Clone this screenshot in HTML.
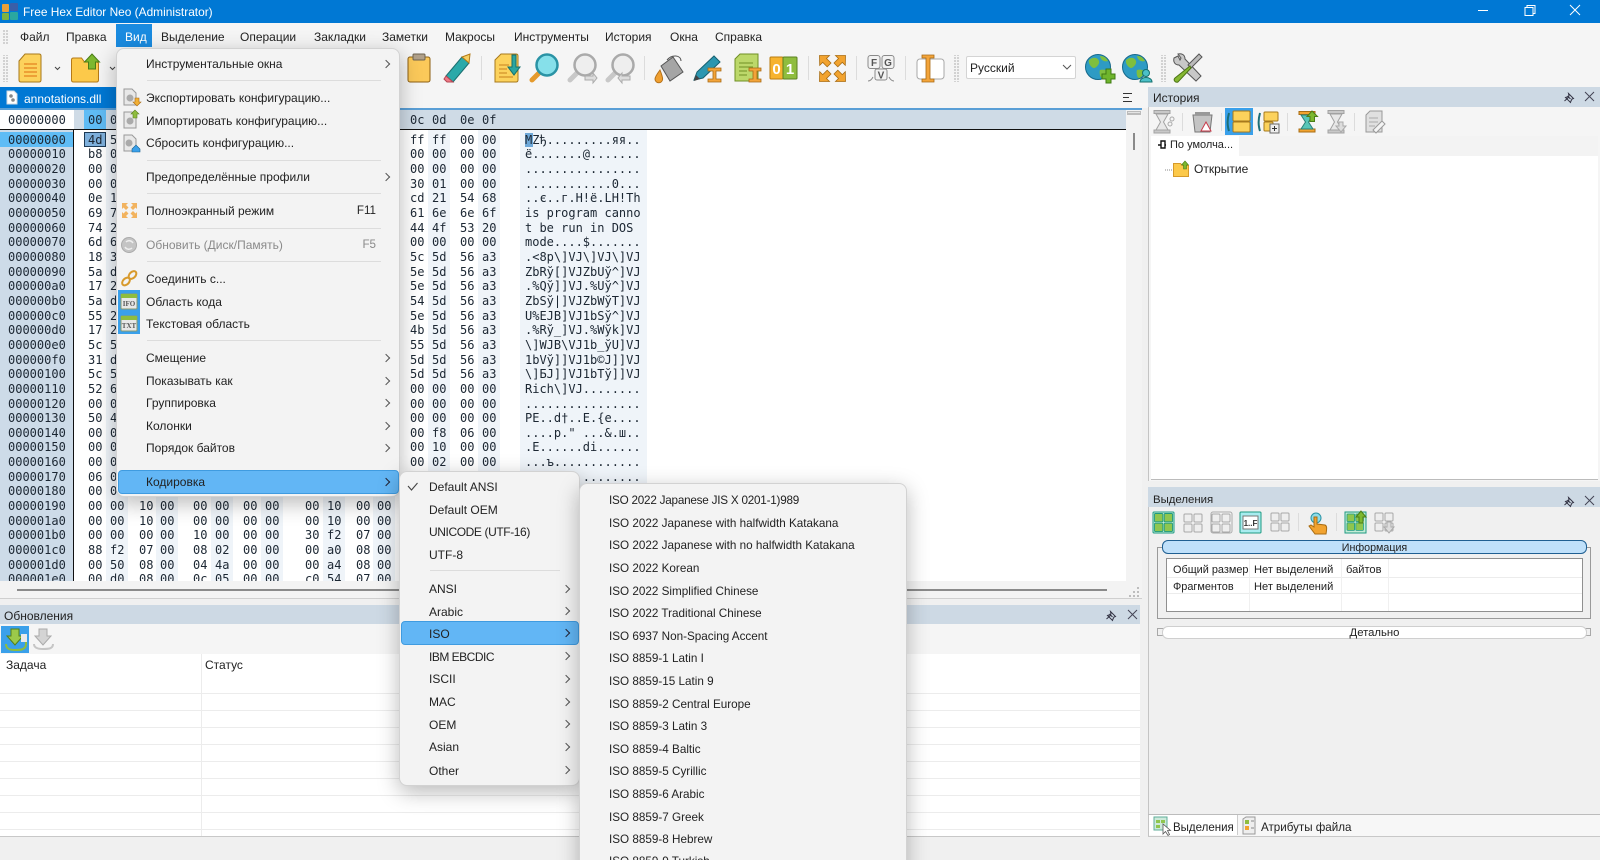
<!DOCTYPE html>
<html lang="ru"><head><meta charset="utf-8"><title>Free Hex Editor Neo</title>
<style>
html,body{margin:0;padding:0;width:1600px;height:860px;overflow:hidden;background:#f0f0f0}
body{position:relative;font:12px/16px "Liberation Sans","Noto Sans CJK SC",sans-serif;color:#222}
.a,.a>div,.t,.hx{position:absolute}
.t{white-space:nowrap}
.hx{font:12px/14.65px "DejaVu Sans Mono","Liberation Mono",monospace;color:#1c2733;white-space:pre}
svg{position:absolute;left:0;top:0}
.menu{position:absolute;background:#f3f3f3;border:1px solid #d2d2d2;border-radius:8px;box-shadow:0 6px 22px rgba(0,0,0,.28);box-sizing:border-box}
.iso .t{font-size:11.7px}
.sep{position:absolute;height:1px;background:#dcdcdc}
.arr{position:absolute;width:5px;height:5px;border-top:1px solid #555;border-right:1px solid #555;transform:rotate(45deg)}
.hl{position:absolute;background:#62b6f5;border:1px solid #3f9be0;border-radius:4px;box-sizing:border-box}
.ln{position:absolute;background:#ececec;height:1px}
</style></head><body>

<!-- title bar -->
<div class="a" style="left:0;top:0;width:1600px;height:23px;background:#0078d4"></div>
<svg width="20" height="23" style="left:2px;top:2px"><rect x="0" y="2" width="7" height="8" rx="1" fill="#e8a13a"/><rect x="8" y="1" width="8" height="8" rx="1" fill="#3a5fa8"/><rect x="0" y="11" width="7" height="7" rx="1" fill="#7cb342"/><rect x="8" y="10" width="8" height="8" rx="1" fill="#2aa7a0"/></svg>
<div class="t" style="left:23px;top:4px;color:#fff;font-size:11.9px">Free Hex Editor Neo (Administrator)</div>
<svg width="1600" height="23"><path d="M1478 10.500h10" stroke="#fff"/><path d="M1525 7.500h8v8h-8zM1527 7.500v-2h8v8h-2" fill="none" stroke="#fff"/><path d="M1570 5l10 10M1580 5l-10 10" stroke="#fff" fill="none"/></svg>

<!-- menubar + toolbar -->
<div class="a" style="left:0;top:23px;width:1600px;height:85px;background:#f5f5f5"></div>
<div class="a" style="left:116px;top:24px;width:36px;height:23px;background:#1a8be0"></div>
<div class="t" style="left:20px;top:29px">Файл</div>
<div class="t" style="left:66px;top:29px">Правка</div>
<div class="t" style="left:125px;top:29px;color:#fff">Вид</div>
<div class="t" style="left:161px;top:29px">Выделение</div>
<div class="t" style="left:240px;top:29px">Операции</div>
<div class="t" style="left:314px;top:29px">Закладки</div>
<div class="t" style="left:382px;top:29px">Заметки</div>
<div class="t" style="left:445px;top:29px">Макросы</div>
<div class="t" style="left:514px;top:29px">Инструменты</div>
<div class="t" style="left:605px;top:29px">История</div>
<div class="t" style="left:670px;top:29px">Окна</div>
<div class="t" style="left:715px;top:29px">Справка</div>

<!-- combo -->
<div class="a" style="left:966px;top:56px;width:110px;height:23px;background:#fff;border:1px solid #d4d4d4;border-radius:2px;box-sizing:border-box"></div>
<div class="t" style="left:970px;top:60px">Русский</div>

<!-- tab -->
<div class="a" style="left:0;top:87px;width:118px;height:21px;background:#0078d4"></div>
<div class="t" style="left:24px;top:91px;color:#fff;font-size:12px">annotations.dll</div>

<!-- hex -->
<div class="a" style="left:0;top:108px;width:1142px;height:473px;overflow:hidden;background:#fff">
  <div style="left:0;top:0;width:1142px;height:2px;background:#5a9fd6"></div>
  <div style="left:74px;top:2px;width:1052px;height:19px;background:#cfdbe6"></div>
  <div style="left:84px;top:2px;width:22px;height:19px;background:#5fbcf5"></div>
  <div style="left:0;top:21px;width:1126px;height:1px;background:#111"></div>
  <div style="left:73px;top:21px;width:1px;height:452px;background:#111"></div>
  <div style="left:0;top:22px;width:73px;height:451px;background:#cddbe8"></div>
  <div style="left:0;top:24px;width:73px;height:15px;background:#5fbcf5"></div>
  <div style="left:106px;top:22px;width:22px;height:451px;background:#eff4f9"></div>
  <div style="left:156px;top:22px;width:22px;height:451px;background:#eff4f9"></div>
  <div style="left:211px;top:22px;width:22px;height:451px;background:#eff4f9"></div>
  <div style="left:261px;top:22px;width:22px;height:451px;background:#eff4f9"></div>
  <div style="left:323px;top:22px;width:22px;height:451px;background:#eff4f9"></div>
  <div style="left:373px;top:22px;width:22px;height:451px;background:#eff4f9"></div>
  <div style="left:428px;top:22px;width:22px;height:451px;background:#eff4f9"></div>
  <div style="left:478px;top:22px;width:22px;height:451px;background:#eff4f9"></div>
  <div style="left:520px;top:22px;width:127px;height:451px;background:#eff4f9"></div>
  <div style="left:84px;top:24px;width:22px;height:15px;background:#7eb0dc;border:1px solid #1d3a55;box-sizing:border-box"></div>
  <div style="left:525px;top:25px;width:8px;height:14px;background:#6ea8d8"></div>
  <div class="hx" style="left:8px;top:5px">00000000</div>
  <div class="hx" style="left:88px;top:5px">00</div><div class="hx" style="left:110px;top:5px">01</div>
  <div class="hx" style="left:410px;top:5px">0c</div><div class="hx" style="left:432px;top:5px">0d</div><div class="hx" style="left:460px;top:5px">0e</div><div class="hx" style="left:482px;top:5px">0f</div>
  <div class="hx" style="left:8px;top:24.700px">00000000
00000010
00000020
00000030
00000040
00000050
00000060
00000070
00000080
00000090
000000a0
000000b0
000000c0
000000d0
000000e0
000000f0
00000100
00000110
00000120
00000130
00000140
00000150
00000160
00000170
00000180
00000190
000001a0
000001b0
000001c0
000001d0
000001e0</div>
  <div class="hx" style="left:88px;top:24.700px">4d
b8
00
00
0e
69
74
6d
18
5a
17
5a
55
17
5c
31
5c
52
00
50
00
00
00
06
00
00
00
00
88
00
00</div>
  <div class="hx" style="left:110px;top:24.700px">5a
00
00
00
1f
73
20
6f
33
d0
25
d0
25
25
5d
d0
5d
69
00
45
00
00
00
00
00
00
00
00
f2
50
d0</div>
  <div class="hx" style="left:139px;top:390.950px">10
10
00
07
08
08</div>
  <div class="hx" style="left:160px;top:390.950px">00
00
00
00
00
00</div>
  <div class="hx" style="left:193px;top:390.950px">00
00
10
08
04
0c</div>
  <div class="hx" style="left:215px;top:390.950px">00
00
00
02
4a
05</div>
  <div class="hx" style="left:243px;top:390.950px">00
00
00
00
00
00</div>
  <div class="hx" style="left:265px;top:390.950px">00
00
00
00
00
00</div>
  <div class="hx" style="left:305px;top:390.950px">00
00
30
00
00
c0</div>
  <div class="hx" style="left:327px;top:390.950px">10
10
f2
a0
a4
54</div>
  <div class="hx" style="left:356px;top:390.950px">00
00
07
08
08
07</div>
  <div class="hx" style="left:377px;top:390.950px">00
00
00
00
00
00</div>
  <div class="hx" style="left:410px;top:24.700px">ff
00
00
30
cd
61
44
00
5c
5e
5e
54
5e
4b
55
5d
5d
00
00
00
00
00
00</div>
  <div class="hx" style="left:432px;top:24.700px">ff
00
00
01
21
6e
4f
00
5d
5d
5d
5d
5d
5d
5d
5d
5d
00
00
00
f8
10
02</div>
  <div class="hx" style="left:460px;top:24.700px">00
00
00
00
54
6e
53
00
56
56
56
56
56
56
56
56
56
00
00
00
06
00
00</div>
  <div class="hx" style="left:482px;top:24.700px">00
00
00
00
68
6f
20
00
a3
a3
a3
a3
a3
a3
a3
a3
a3
00
00
00
00
00
00</div>
  <div class="hx" style="left:525px;top:24.700px">MZђ.........яя..
ё.......@.......
................
............0...
..є..г.H!ё.LH!Th
is program canno
t be run in DOS 
mode....$.......
.&lt;8p\]VJ\]VJ\]VJ
ZbRў[]VJZbUў^]VJ
.%Qў]]VJ.%Uў^]VJ
ZbSў|]VJZbWўT]VJ
U%EJB]VJ1bSў^]VJ
.%Rў_]VJ.%Wўk]VJ
\]WJB\VJ1b_ўU]VJ
1bVў]]VJ1b©J]]VJ
\]БJ]]VJ1bTў]]VJ
Rich\]VJ........
................
PE..d†..E.{е....
....р." ...&amp;.ш..
.Е......di......
...ъ............
................</div>
</div>

<!-- editor scrollbars -->
<div class="a" style="left:1126px;top:110px;width:16px;height:488px;background:#f3f3f3"></div>
<div class="a" style="left:1127px;top:111px;width:14px;height:4px;background:#e4e4e4;border:1px solid #bbb;border-bottom-width:2px;box-sizing:border-box"></div>
<div class="a" style="left:1133px;top:133px;width:2px;height:17px;background:#8a8a8a"></div>
<div class="a" style="left:0;top:581px;width:1142px;height:17px;background:#f3f3f3"></div>
<div class="a" style="left:17px;top:589px;width:1090px;height:2px;background:#8a8a8a"></div>
<div class="a" style="left:0;top:598px;width:1142px;height:1px;background:#cfcfcf"></div>

<!-- updates panel -->
<div class="a" style="left:0;top:605px;width:1140px;height:19px;background:#cdd9e4"></div>
<div class="t" style="left:4px;top:608px;font-size:12px">Обновления</div>
<div class="a" style="left:0;top:624px;width:1140px;height:30px;background:#f5f5f5"></div>
<div class="a" style="left:1px;top:626px;width:28px;height:27px;background:#3aa0ea"></div>
<div class="a" style="left:0;top:654px;width:1140px;height:182px;background:#fff"></div>
<div class="a" style="left:0;top:836px;width:1140px;height:1px;background:#c8c8c8"></div>
<div class="a" style="left:201px;top:654px;width:1px;height:182px;background:#ececec"></div>
<div class="t" style="left:6px;top:657px">Задача</div>
<div class="t" style="left:205px;top:657px">Статус</div>
<div class="ln" style="left:0;top:693px;width:1140px"></div>
<div class="ln" style="left:0;top:710px;width:1140px"></div>
<div class="ln" style="left:0;top:727px;width:1140px"></div>
<div class="ln" style="left:0;top:744px;width:1140px"></div>
<div class="ln" style="left:0;top:761px;width:1140px"></div>
<div class="ln" style="left:0;top:778px;width:1140px"></div>
<div class="ln" style="left:0;top:795px;width:1140px"></div>
<div class="ln" style="left:0;top:812px;width:1140px"></div>
<div class="ln" style="left:0;top:829px;width:1140px"></div>

<!-- history panel -->
<div class="a" style="left:1148px;top:87px;width:452px;height:394px;background:#f5f5f5;border-left:1px solid #c4c4c4;box-sizing:border-box"></div>
<div class="a" style="left:1148px;top:87px;width:452px;height:20px;background:#cdd9e4"></div>
<div class="t" style="left:1153px;top:90px;font-size:12px">История</div>
<div class="a" style="left:1225px;top:108px;width:28px;height:27px;background:#3aa0ea"></div>
<div class="a" style="left:1151px;top:136px;width:447px;height:344px;background:#fff;border-bottom:1px solid #bbb;box-sizing:border-box"></div>
<div class="a" style="left:1239px;top:136px;width:359px;height:20px;background:#f3f3f3"></div>
<div class="t" style="left:1170px;top:137px;font-size:11px">По умолча...</div>
<div class="t" style="left:1194px;top:161px">Открытие</div>

<!-- selection panel -->
<div class="a" style="left:1148px;top:487px;width:452px;height:350px;background:#f0f0f0;border-left:1px solid #c4c4c4;box-sizing:border-box"></div>
<div class="a" style="left:1148px;top:487px;width:452px;height:20px;background:#cdd9e4"></div>
<div class="t" style="left:1153px;top:492px;font-size:11.4px">Выделения</div>
<div class="a" style="left:1157px;top:547px;width:434px;height:72px;border:1px solid #9a9a9a;box-sizing:border-box"></div>
<div class="a" style="left:1162px;top:540px;width:425px;height:14px;background:#bfe0fa;border:1px solid #1f5f92;border-radius:6px;box-sizing:border-box;text-align:center;line-height:14px;overflow:hidden;font-size:10.7px">Информация</div>
<div class="a" style="left:1166px;top:558px;width:417px;height:54px;background:#fff;border:1px solid #8f8f8f;box-sizing:border-box"></div>
<div class="ln" style="left:1167px;top:577px;width:415px"></div>
<div class="ln" style="left:1167px;top:593px;width:415px"></div>
<div class="a" style="left:1249px;top:559px;width:1px;height:52px;background:#f0f0f0"></div>
<div class="a" style="left:1341px;top:559px;width:1px;height:52px;background:#f0f0f0"></div>
<div class="a" style="left:1388px;top:559px;width:1px;height:52px;background:#f0f0f0"></div>
<div class="t" style="left:1173px;top:562px;font-size:10.9px">Общий размер</div>
<div class="t" style="left:1254px;top:562px;font-size:11.1px">Нет выделений</div>
<div class="t" style="left:1346px;top:562px;font-size:11.1px">байтов</div>
<div class="t" style="left:1173px;top:579px;font-size:10.9px">Фрагментов</div>
<div class="t" style="left:1254px;top:579px;font-size:11.1px">Нет выделений</div>
<div class="a" style="left:1157px;top:628px;width:434px;height:8px;border:1px solid #a8a8a8;box-sizing:border-box"></div>
<div class="a" style="left:1162px;top:626px;width:425px;height:13px;background:#fff;border:1px solid #cfcfcf;border-radius:6px;box-sizing:border-box;text-align:center;line-height:13px;font-size:11.3px">Детально</div>
<div class="a" style="left:1148px;top:814px;width:452px;height:1px;background:#bcbcbc"></div>
<div class="a" style="left:1149px;top:815px;width:451px;height:21px;background:#f7f7f7"></div>
<div class="a" style="left:1149px;top:815px;width:89px;height:20px;background:#fff;border-right:1px solid #ccc;box-sizing:border-box"></div>
<div class="a" style="left:1148px;top:836px;width:452px;height:1px;background:#c8c8c8"></div>
<div class="t" style="left:1173px;top:820px;font-size:11.5px">Выделения</div>
<div class="t" style="left:1261px;top:820px;font-size:11.6px">Атрибуты файла</div>

<!-- icons -->
<svg width="1600" height="860">
<defs>
<pattern id="dots" width="3" height="3" patternUnits="userSpaceOnUse"><rect width="2" height="2" fill="#d2d2d2"/></pattern>
<g id="gridg"><rect x="0" y="0" width="9.500" height="9.500" rx="1" fill="#8fc64f" stroke="#1e9a82"/><rect x="11" y="0" width="9.500" height="9.500" rx="1" fill="#8fc64f" stroke="#1e9a82"/><rect x="0" y="11" width="9.500" height="9.500" rx="1" fill="#8fc64f" stroke="#1e9a82"/><rect x="11" y="11" width="9.500" height="9.500" rx="1" fill="#8fc64f" stroke="#1e9a82"/></g>
<g id="grid"><rect x="0" y="0" width="8" height="8" rx="1" fill="#eee" stroke="#a8a8a8"/><rect x="10" y="0" width="8" height="8" rx="1" fill="#eee" stroke="#a8a8a8"/><rect x="0" y="10" width="8" height="8" rx="1" fill="#eee" stroke="#a8a8a8"/><rect x="10" y="10" width="8" height="8" rx="1" fill="#eee" stroke="#a8a8a8"/></g>
<g id="hg"><path d="M1 0.500h16v3h-16zM1 20h16v3h-16z" fill="#c8c8c8" stroke="#a2a2a2"/><path d="M3 4h12l-4.500 8 4.500 8h-12l4.500-8z" fill="#e8e8e8" stroke="#a2a2a2"/></g>
<path id="pin" d="M0 9l4.500-4M3 4l3 3M4 1.500l5 5 -1.500 .5-1 2-.5 1.500-5-5 1.500-.5 2-1z" fill="none" stroke="#334"/>
<g id="fa"><path d="M0 0h10l-3 3 4.500 4.500-3.800 3.800-4.500-4.500-3 3z" fill="#f2a32f" stroke="#a96d13" stroke-width=".8"/></g>
</defs>
<rect x="3" y="30" width="6" height="15" fill="url(#dots)"/><rect x="3" y="55" width="6" height="27" fill="url(#dots)"/>
<rect x="953" y="55" width="6" height="27" fill="url(#dots)"/><rect x="1161" y="55" width="6" height="27" fill="url(#dots)"/>
<path d="M1063 65l4 4 4-4" fill="none" stroke="#555"/>
<!-- new -->
<path d="M19 61l6-7h14q2 0 2 2v24q0 2-2 2h-18q-2 0-2-2z" fill="#fcd25c" stroke="#a8791c"/><path d="M24 64h13M24 68h13M24 72h13M24 76h13" stroke="#e8902a" stroke-width="1.500"/>
<path d="M55 67l2.500 2.500 2.500-2.500M110 67l2.500 2.500 2.500-2.500" fill="none" stroke="#444"/>
<!-- open -->
<path d="M71.500 60q0-2 2-2h8l3 4h12q2 0 2 2v16q0 2-2 2h-23q-2 0-2-2z" fill="#fcc94a" stroke="#b57a16"/><path d="M92 54l-7.500 8h4v7h7v-7h4z" fill="#7cb82f" stroke="#4a7d16"/>
<!-- clipboard -->
<rect x="408" y="57" width="22" height="25" rx="2" fill="#fbc95a" stroke="#8d5f12"/><rect x="413" y="54" width="12" height="6" rx="1" fill="#b0a08a" stroke="#6e6350"/>
<!-- pencil -->
<path d="M446 76l16-19 7 6-16 19z" fill="#2ba9a9" stroke="#1b6f70"/><path d="M446 76l-2 3 3 3 6 0-7-6z" fill="#ef7a86" stroke="#b34652"/><path d="M462 57l8-3-1 9z" fill="#f6cf62" stroke="#b37a18"/>
<path d="M481.500 56v24" stroke="#dcdcdc"/>
<!-- goto -->
<path d="M495 60l6-6h15q2 0 2 2v24q0 2-2 2h-21z" fill="#fcd25c" stroke="#a8791c"/><path d="M499 65h10M499 69h8M499 73h8M499 77h14" stroke="#c9811e"/><path d="M512 55h4v12h4l-6 8-6-8h4z" fill="#2ba5a0" stroke="#14706d"/>
<!-- magnifier -->
<path d="M541 71l-9 9" stroke="#e59a2c" stroke-width="5" stroke-linecap="round"/><circle cx="547" cy="65" r="10.500" fill="#86e0ea" stroke="#2a93a5" stroke-width="2.500"/>
<path d="M578 72l-8 8" stroke="#c8c8c8" stroke-width="5" stroke-linecap="round"/><circle cx="585" cy="65" r="10.500" fill="#eee" stroke="#aaa" stroke-width="2.500"/><path d="M585 76h8v-3l4 5-4 5v-3h-8z" fill="#ddd" stroke="#aaa"/>
<path d="M616 72l-8 8" stroke="#c8c8c8" stroke-width="5" stroke-linecap="round"/><circle cx="623" cy="65" r="10.500" fill="#eee" stroke="#aaa" stroke-width="2.500"/><path d="M630 76h-8v-3l-4 5 4 5v-3h8z" fill="#ddd" stroke="#aaa"/>
<path d="M644.500 56v24" stroke="#dcdcdc"/>
<!-- bucket -->
<path d="M661 66l12-9 10 15-13 9z" fill="#a5a5a5" stroke="#555"/><path d="M660 70c-3 4-5 7-5 9a3.800 3.800 0 0 0 7.600 0c0-2-1-5-2.600-9z" fill="#f0a030" stroke="#b3701a"/><path d="M667 60c5-6 14-5 14 1" fill="none" stroke="#555"/>
<!-- pencil I -->
<path d="M694 80l3-8 17-16 6 6-17 16z" fill="#2b96b0" stroke="#17606f"/><path d="M694 81l2-6 4 4z" fill="#444"/><path d="M708 68h13v3h-5v8h5v3h-13v-3h5v-8h-5z" fill="#f3a43a" stroke="#a86a15" stroke-width=".8"/>
<!-- doc I -->
<path d="M735 59l5-5h18v27h-23z" fill="#bcd86a" stroke="#6f8f24"/><path d="M739 63h14M739 67h14M739 71h8M739 75h8" stroke="#6f8f24"/><path d="M749 68h12v3h-4v8h4v3h-12v-3h4v-8h-4z" fill="#f3a43a" stroke="#a86a15" stroke-width=".8"/>
<!-- 01 -->
<rect x="770" y="57" width="13" height="22" rx="1" fill="#f7b32e" stroke="#b97c10"/><rect x="783" y="57" width="14" height="22" rx="1" fill="#8fbd3e" stroke="#5b8120"/>
<text x="776.500" y="74" font-family="Liberation Sans" font-weight="bold" font-size="15" fill="#fff" text-anchor="middle">0</text><text x="790" y="74" font-family="Liberation Sans" font-weight="bold" font-size="15" fill="#fff" text-anchor="middle">1</text>
<path d="M808.500 56v24" stroke="#dcdcdc"/>
<!-- fullscreen -->
<use href="#fa" transform="translate(819.500 55.500)"/><use href="#fa" transform="translate(845.500 55.500) scale(-1 1)"/><use href="#fa" transform="translate(819.500 81.500) scale(1 -1)"/><use href="#fa" transform="translate(845.500 81.500) scale(-1 -1)"/>
<path d="M856.500 56v24" stroke="#dcdcdc"/>
<!-- FGV -->
<g fill="#f2f2f2" stroke="#8a8a8a"><rect x="868" y="55.500" width="12" height="13" rx="2.500"/><rect x="882" y="55.500" width="12" height="13" rx="2.500"/><rect x="875" y="69" width="12" height="11" rx="2"/></g>
<path d="M868 81q3 0 5-4M894 81q-3 0-5-4" fill="none" stroke="#8a8a8a"/>
<g font-family="Liberation Sans" font-weight="bold" font-size="10" fill="#555" text-anchor="middle"><text x="874" y="66">F</text><text x="888" y="66">G</text><text x="881" y="78.500">V</text></g>
<path d="M905.500 56v24" stroke="#dcdcdc"/>
<!-- book -->
<rect x="917" y="59" width="27" height="20" rx="3" fill="#fff" stroke="#a8a8a8"/><path d="M922 55h12v3h-4v21h4v3h-12v-3h4v-21h-4z" fill="#f3a43a" stroke="#a86a15" stroke-width=".8"/>
<!-- globes -->
<circle cx="1098" cy="67" r="12.500" fill="#2e9bc4" stroke="#15688a"/><path d="M1089 60c5-4 9-2 10 1s-3 7-5 7-6-4-5-8zM1100 70c3-1 7 0 7 2s-3 6-5 6-3-6-2-8zM1100 56c3 0 6 1 8 5-3 1-7 0-8-5z" fill="#7fbf3f"/><path d="M1106 69h5v5h4v5h-4v4h-5v-4h-4v-5h4z" fill="#6fb52c" stroke="#3f7a13"/>
<circle cx="1135" cy="67" r="12.500" fill="#2e9bc4" stroke="#15688a"/><path d="M1126 60c5-4 9-2 10 1s-3 7-5 7-6-4-5-8zM1137 70c3-1 7 0 7 2s-3 6-5 6-3-6-2-8zM1137 56c3 0 6 1 8 5-3 1-7 0-8-5z" fill="#7fbf3f"/><circle cx="1146" cy="73" r="3.500" fill="#4cc0c8" stroke="#14706d"/><path d="M1140 82c0-6 12-6 12 0z" fill="#4cc0c8" stroke="#14706d"/>
<!-- tools -->
<path d="M1178 56l-4 2c-1 4 1 7 5 7l17 16 5-5-16-17c0-4-3-6-7-5l3 4-1 2z" fill="#c8c8c8" stroke="#555"/><path d="M1199 54l3 3-11 11-3-3z" fill="#bbb" stroke="#555"/><path d="M1190 66l-15 12c-2 2 0 5 3 4l13-14z" fill="#86b832" stroke="#4c7414"/>
<!-- hamburger -->
<path d="M1123 93.500h9M1123 97.500h6M1123 101.500h9" stroke="#333"/>
<!-- tab icon -->
<path d="M7 91h7l3 3v10h-10z" fill="#fff" stroke="#d0d8e0"/><circle cx="11" cy="96" r="1.800" fill="#888"/><circle cx="13" cy="100" r="1.800" fill="#888"/>
<!-- pin / close -->
<use href="#pin" x="1564.500" y="92"/><use href="#pin" x="1564.500" y="496"/><use href="#pin" x="1106.500" y="610"/>
<path d="M1585 92l9 9M1594 92l-9 9M1585 496l9 9M1594 496l-9 9M1128 610l9 9M1137 610l-9 9" fill="none" stroke="#445"/>
<!-- update icons -->
<path d="M11 629h8v7h4l-8 9-8-9h4z" fill="#9bc94a" stroke="#557f17"/><path d="M6 644c0 5 4 6 9 6s11 0 11-6v-4" fill="none" stroke="#8fbd3e" stroke-width="2"/><rect x="21" y="634" width="6" height="8" fill="#eaeaea"/>
<path d="M39 629h8v7h4l-8 9-8-9h4z" fill="#d4d4d4" stroke="#aaa"/><path d="M34 644c0 4 4 5 9 5s10 0 10-5" fill="none" stroke="#c6c6c6" stroke-width="2"/>
<!-- history toolbar -->
<use href="#hg" x="1153" y="110"/><circle cx="1172" cy="119" r="2" fill="none" stroke="#aaa"/><circle cx="1170" cy="124" r="2" fill="none" stroke="#aaa"/>
<path d="M1182.500 113v18M1221.500 113v18M1287.500 113v18M1354.500 113v18" stroke="#dcdcdc"/>
<path d="M1193 115h19l-2 17h-15z" fill="#c4c4c4" stroke="#777"/><path d="M1195 112h15v3h-15z" fill="#999"/><path d="M1206 122l-5 9h10z" fill="#fff" stroke="#c83a4a"/>
<path d="M1229 113c-2 7-2 12 0 18" fill="none" stroke="#1c6f78" stroke-width="2"/><rect x="1233" y="111" width="17" height="10" rx="1" fill="#fcd25c" stroke="#a8791c"/><rect x="1233" y="122" width="17" height="10" rx="1" fill="#fcd25c" stroke="#a8791c"/>
<path d="M1260 113c-2 7-2 12 0 18" fill="none" stroke="#1c6f78" stroke-width="2"/><rect x="1264" y="112" width="14" height="9" rx="1" fill="#fcd25c" stroke="#a8791c"/><rect x="1264" y="122" width="9" height="9" rx="1" fill="#fcd25c" stroke="#a8791c"/><rect x="1270" y="124" width="9" height="9" fill="#eee" stroke="#666"/><path d="M1272 128.500h5M1274.500 126v5" stroke="#333"/>
<path d="M1299 111.500h16v3h-16zM1299 129h16v3h-16z" fill="#f2a32f" stroke="#a96d13"/><path d="M1301 115h12l-4.500 7 4.500 7h-12l4.500-7z" fill="#58c6b8" stroke="#2a8077"/><path d="M1312 111l-5 5.500h3v5h4.500v-5h3z" fill="#7cb82f" stroke="#4a7d16"/>
<use href="#hg" x="1327" y="110"/><path d="M1339 122h4v4h3l-5 6-5-6h3z" fill="#ddd" stroke="#aaa"/>
<path d="M1366 115l4-4h12v21h-16z" fill="#e0e0e0" stroke="#999"/><path d="M1369 118h9M1369 122h9M1369 126h6" stroke="#aaa"/><path d="M1373 130l9-9 3 3-9 9z" fill="#f4f4f4" stroke="#999"/>
<!-- tree -->
<path d="M1158 145h3M1161 141h4v7h-4zM1165 145h1" fill="none" stroke="#111" stroke-width="1.400"/>
<path d="M1165 170h7" stroke="#888" stroke-dasharray="1 1"/>
<path d="M1173.500 163.500h7l2 2h6v11h-15z" fill="#fcc94a" stroke="#d69a2a"/><path d="M1185 161l-3.500 4h2v4h3v-4h2z" fill="#7cb82f" stroke="#4a7d16" stroke-width=".6"/>
<!-- selection toolbar -->
<rect x="1153" y="512" width="21" height="21" rx="1" fill="#c4ecd6" stroke="#1e9a82"/><use href="#gridg" transform="translate(1154.500 513.500) scale(.88)"/>
<use href="#grid" x="1184" y="514"/><rect x="1211" y="512" width="21" height="21" rx="2" fill="#f4f4f4" stroke="#aaa"/><use href="#grid" x="1212" y="514"/>
<rect x="1240" y="512" width="21" height="21" rx="1" fill="#a8ecef" stroke="#1e9a82"/><rect x="1243" y="516" width="15" height="13" fill="#fff" stroke="#777"/><text x="1250.500" y="526" font-family="Liberation Sans" font-weight="bold" font-size="8" text-anchor="middle" fill="#333">1..F</text>
<use href="#grid" x="1271" y="513"/>
<path d="M1298.500 513v18M1336.500 513v18" stroke="#dcdcdc"/>
<circle cx="1316" cy="518" r="5" fill="#8fdce8" stroke="#2a93a5"/><path d="M1314 517h3v7l8 1c2 1 2 3 1 9h-11l-6-8 2-1 3 2z" fill="#f2a32f" stroke="#a96d13"/>
<rect x="1345" y="512" width="21" height="21" fill="#c4ecd6" stroke="#1e9a82"/><use href="#gridg" transform="translate(1347 514) scale(.8)"/><path d="M1361 511l-5 6h3v6h4v-6h3z" fill="#7cb82f" stroke="#4a7d16"/>
<use href="#grid" x="1375" y="513"/><path d="M1387 522h4v5h3l-5 6-5-6h3z" fill="#ddd" stroke="#aaa"/>
<!-- bottom tabs -->
<rect x="1154" y="817" width="13" height="13" fill="#cdeadb" stroke="#5fae9a"/><path d="M1156 820h4v3h-4zM1161 820h4v3h-4zM1156 825h4v3h-4z" fill="#8fc64f"/><path d="M1163 824l0 10 2.500-2.500 2.500 4 1.500-1-2-4 3 0z" fill="#fff" stroke="#555" stroke-width=".8"/>
<path d="M1243 819l3-2h9v17h-12z" fill="#eee" stroke="#999"/><rect x="1245" y="820" width="4" height="4" fill="#8fbd3e"/><rect x="1245" y="826" width="4" height="4" fill="#f2a32f"/><path d="M1251 821h3M1251 828h3" stroke="#888"/>
<!-- corner grip -->
<g fill="#bdbdbd"><rect x="1137" y="587" width="2" height="2"/><rect x="1137" y="591" width="2" height="2"/><rect x="1137" y="595" width="2" height="2"/><rect x="1133" y="591" width="2" height="2"/><rect x="1133" y="595" width="2" height="2"/><rect x="1129" y="595" width="2" height="2"/></g>
</svg>

<!-- main dropdown -->
<div class="menu" style="left:116px;top:48px;width:284px;height:449px">
  <div class="t" style="left:29px;top:6.500px">Инструментальные окна</div><div class="arr" style="left:266px;top:12px"></div>
  <div class="sep" style="left:30px;top:31px;width:234px"></div>
  <div class="t" style="left:29px;top:40.500px">Экспортировать конфигурацию...</div>
  <div class="t" style="left:29px;top:63.500px">Импортировать конфигурацию...</div>
  <div class="t" style="left:29px;top:86px">Сбросить конфигурацию...</div>
  <div class="sep" style="left:30px;top:111px;width:234px"></div>
  <div class="t" style="left:29px;top:119.500px">Предопределённые профили</div><div class="arr" style="left:266px;top:125px"></div>
  <div class="sep" style="left:30px;top:144px;width:234px"></div>
  <div class="t" style="left:29px;top:153.500px">Полноэкранный режим</div><div class="t" style="right:23px;top:153.500px;font-size:11.600px">F11</div>
  <div class="sep" style="left:30px;top:179px;width:234px"></div>
  <div class="t" style="left:29px;top:187.500px;color:#8a8a8a">Обновить (Диск/Память)</div><div class="t" style="right:23px;top:187.500px;color:#8a8a8a;font-size:11.600px">F5</div>
  <div class="sep" style="left:30px;top:212px;width:234px"></div>
  <div class="t" style="left:29px;top:221.500px">Соединить с...</div>
  <div class="t" style="left:29px;top:244.500px">Область кода</div>
  <div class="t" style="left:29px;top:266.500px">Текстовая область</div>
  <div class="a" style="left:1px;top:241px;width:22px;height:44px;background:#3aa0ea"></div>
  <div class="sep" style="left:30px;top:291px;width:234px"></div>
  <div class="t" style="left:29px;top:301px">Смещение</div><div class="arr" style="left:266px;top:306px"></div>
  <div class="t" style="left:29px;top:323.500px">Показывать как</div><div class="arr" style="left:266px;top:329px"></div>
  <div class="t" style="left:29px;top:346px">Группировка</div><div class="arr" style="left:266px;top:351px"></div>
  <div class="t" style="left:29px;top:368.500px">Колонки</div><div class="arr" style="left:266px;top:374px"></div>
  <div class="t" style="left:29px;top:391px">Порядок байтов</div><div class="arr" style="left:266px;top:396px"></div>
  <div class="hl" style="left:1px;top:421px;width:281px;height:24px"></div>
  <div class="t" style="left:29px;top:425px">Кодировка</div><div class="arr" style="left:266px;top:430px;border-color:#223"></div>
  <svg width="284" height="449">
    <g transform="translate(-117 -49)">
      <path d="M124 89h8l4 4v12h-12z" fill="#e8e8e8" stroke="#999"/><circle cx="130" cy="98" r="3.500" fill="#aaa"/><path d="M135 98h4v4h2l-4 4-4-4h2z" fill="#f2b035" stroke="#a86a15" stroke-width=".6"/>
      <path d="M124 112h8l4 4v12h-12z" fill="#e8e8e8" stroke="#999"/><circle cx="130" cy="121" r="3.500" fill="#aaa"/><path d="M135 110l-4 4h2v4h4v-4h2z" fill="#8fbd3e" stroke="#5b8120" stroke-width=".6"/>
      <path d="M124 135h8l4 4v12h-12z" fill="#e8e8e8" stroke="#999"/><circle cx="129" cy="143" r="3.500" fill="#aaa"/><path d="M132 149l4-4 4 4v3h-8z" fill="#3aa0ea" stroke="#17608f" stroke-width=".6"/>
      <g fill="#f2b35f"><path d="M122 203h6l-2 2 2.500 2.500-2.500 2.500-2.500-2.500-1.500 1.500z"/><path d="M137 203h-6l2 2-2.500 2.500 2.500 2.500 2.500-2.500 1.500 1.500z"/><path d="M122 218h6l-2-2 2.500-2.500-2.500-2.500-2.500 2.500-1.500-1.500z"/><path d="M137 218h-6l2-2-2.500-2.500 2.500-2.500 2.500 2.500 1.500-1.500z"/></g>
      <circle cx="129" cy="245" r="7.500" fill="#c4c4c4" stroke="#aaa"/><path d="M126 242a4.500 4.500 0 0 1 7 1M132 248a4.500 4.500 0 0 1-7-1" fill="none" stroke="#eee" stroke-width="1.500"/>
      <ellipse cx="126" cy="281.500" rx="4.500" ry="3" transform="rotate(-45 126 281.500)" fill="none" stroke="#d89a2c" stroke-width="2"/><ellipse cx="132.500" cy="275" rx="4.500" ry="3" transform="rotate(-45 132.500 275)" fill="none" stroke="#d89a2c" stroke-width="2"/>
      <rect x="121" y="294" width="16" height="15" rx="1" fill="#e8e8e8" stroke="#8a9a70"/><rect x="121" y="294" width="16" height="4" fill="#8fbd3e"/><text x="129" y="306" font-family="Liberation Serif" font-weight="bold" font-size="7" fill="#555" text-anchor="middle">IFO</text>
      <rect x="121" y="316" width="16" height="15" rx="1" fill="#e8e8e8" stroke="#8a9a70"/><rect x="121" y="316" width="16" height="4" fill="#8fbd3e"/><text x="129" y="328" font-family="Liberation Serif" font-weight="bold" font-size="7" fill="#555" text-anchor="middle">TXT</text>
    </g>
  </svg>
</div>

<!-- encoding submenu -->
<div class="menu" style="left:399px;top:471px;width:181px;height:315px">
  <svg width="180" height="40"><path d="M8 14l3.500 4 6-7" fill="none" stroke="#444" stroke-width="1.100"/></svg>
  <div class="t" style="left:29px;top:7px">Default ANSI</div>
  <div class="t" style="left:29px;top:30px">Default OEM</div>
  <div class="t" style="left:29px;top:52px;letter-spacing:-.4px">UNICODE (UTF-16)</div>
  <div class="t" style="left:29px;top:75px">UTF-8</div>
  <div class="sep" style="left:30px;top:98px;width:130px"></div>
  <div class="t" style="left:29px;top:109px">ANSI</div><div class="arr" style="left:163px;top:114px"></div>
  <div class="t" style="left:29px;top:132px">Arabic</div><div class="arr" style="left:163px;top:136px"></div>
  <div class="hl" style="left:1px;top:149px;width:178px;height:24px"></div>
  <div class="t" style="left:29px;top:154px">ISO</div><div class="arr" style="left:163px;top:158px;border-color:#223"></div>
  <div class="t" style="left:29px;top:177px;letter-spacing:-.5px">IBM EBCDIC</div><div class="arr" style="left:163px;top:181px"></div>
  <div class="t" style="left:29px;top:199px">ISCII</div><div class="arr" style="left:163px;top:204px"></div>
  <div class="t" style="left:29px;top:222px">MAC</div><div class="arr" style="left:163px;top:227px"></div>
  <div class="t" style="left:29px;top:244.500px">OEM</div><div class="arr" style="left:163px;top:249px"></div>
  <div class="t" style="left:29px;top:267px">Asian</div><div class="arr" style="left:163px;top:272px"></div>
  <div class="t" style="left:29px;top:291px">Other</div><div class="arr" style="left:163px;top:295px"></div>
</div>

<!-- ISO submenu -->
<div class="menu iso" style="left:579px;top:483px;width:328px;height:400px">
  <div class="t" style="left:29px;top:9px;letter-spacing:-.22px">ISO 2022 Japanese JIS X 0201-1)989</div>
  <div class="t" style="left:29px;top:32px">ISO 2022 Japanese with halfwidth Katakana</div>
  <div class="t" style="left:29px;top:54px">ISO 2022 Japanese with no halfwidth Katakana</div>
  <div class="t" style="left:29px;top:77px">ISO 2022 Korean</div>
  <div class="t" style="left:29px;top:100px">ISO 2022 Simplified Chinese</div>
  <div class="t" style="left:29px;top:122px">ISO 2022 Traditional Chinese</div>
  <div class="t" style="left:29px;top:145px">ISO 6937 Non-Spacing Accent</div>
  <div class="t" style="left:29px;top:167px">ISO 8859-1 Latin I</div>
  <div class="t" style="left:29px;top:190px">ISO 8859-15 Latin 9</div>
  <div class="t" style="left:29px;top:213px">ISO 8859-2 Central Europe</div>
  <div class="t" style="left:29px;top:235px">ISO 8859-3 Latin 3</div>
  <div class="t" style="left:29px;top:258px">ISO 8859-4 Baltic</div>
  <div class="t" style="left:29px;top:280px">ISO 8859-5 Cyrillic</div>
  <div class="t" style="left:29px;top:303px">ISO 8859-6 Arabic</div>
  <div class="t" style="left:29px;top:326px">ISO 8859-7 Greek</div>
  <div class="t" style="left:29px;top:348px">ISO 8859-8 Hebrew</div>
  <div class="t" style="left:29px;top:370px">ISO 8859-9 Turkish</div>
</div>
</body></html>
